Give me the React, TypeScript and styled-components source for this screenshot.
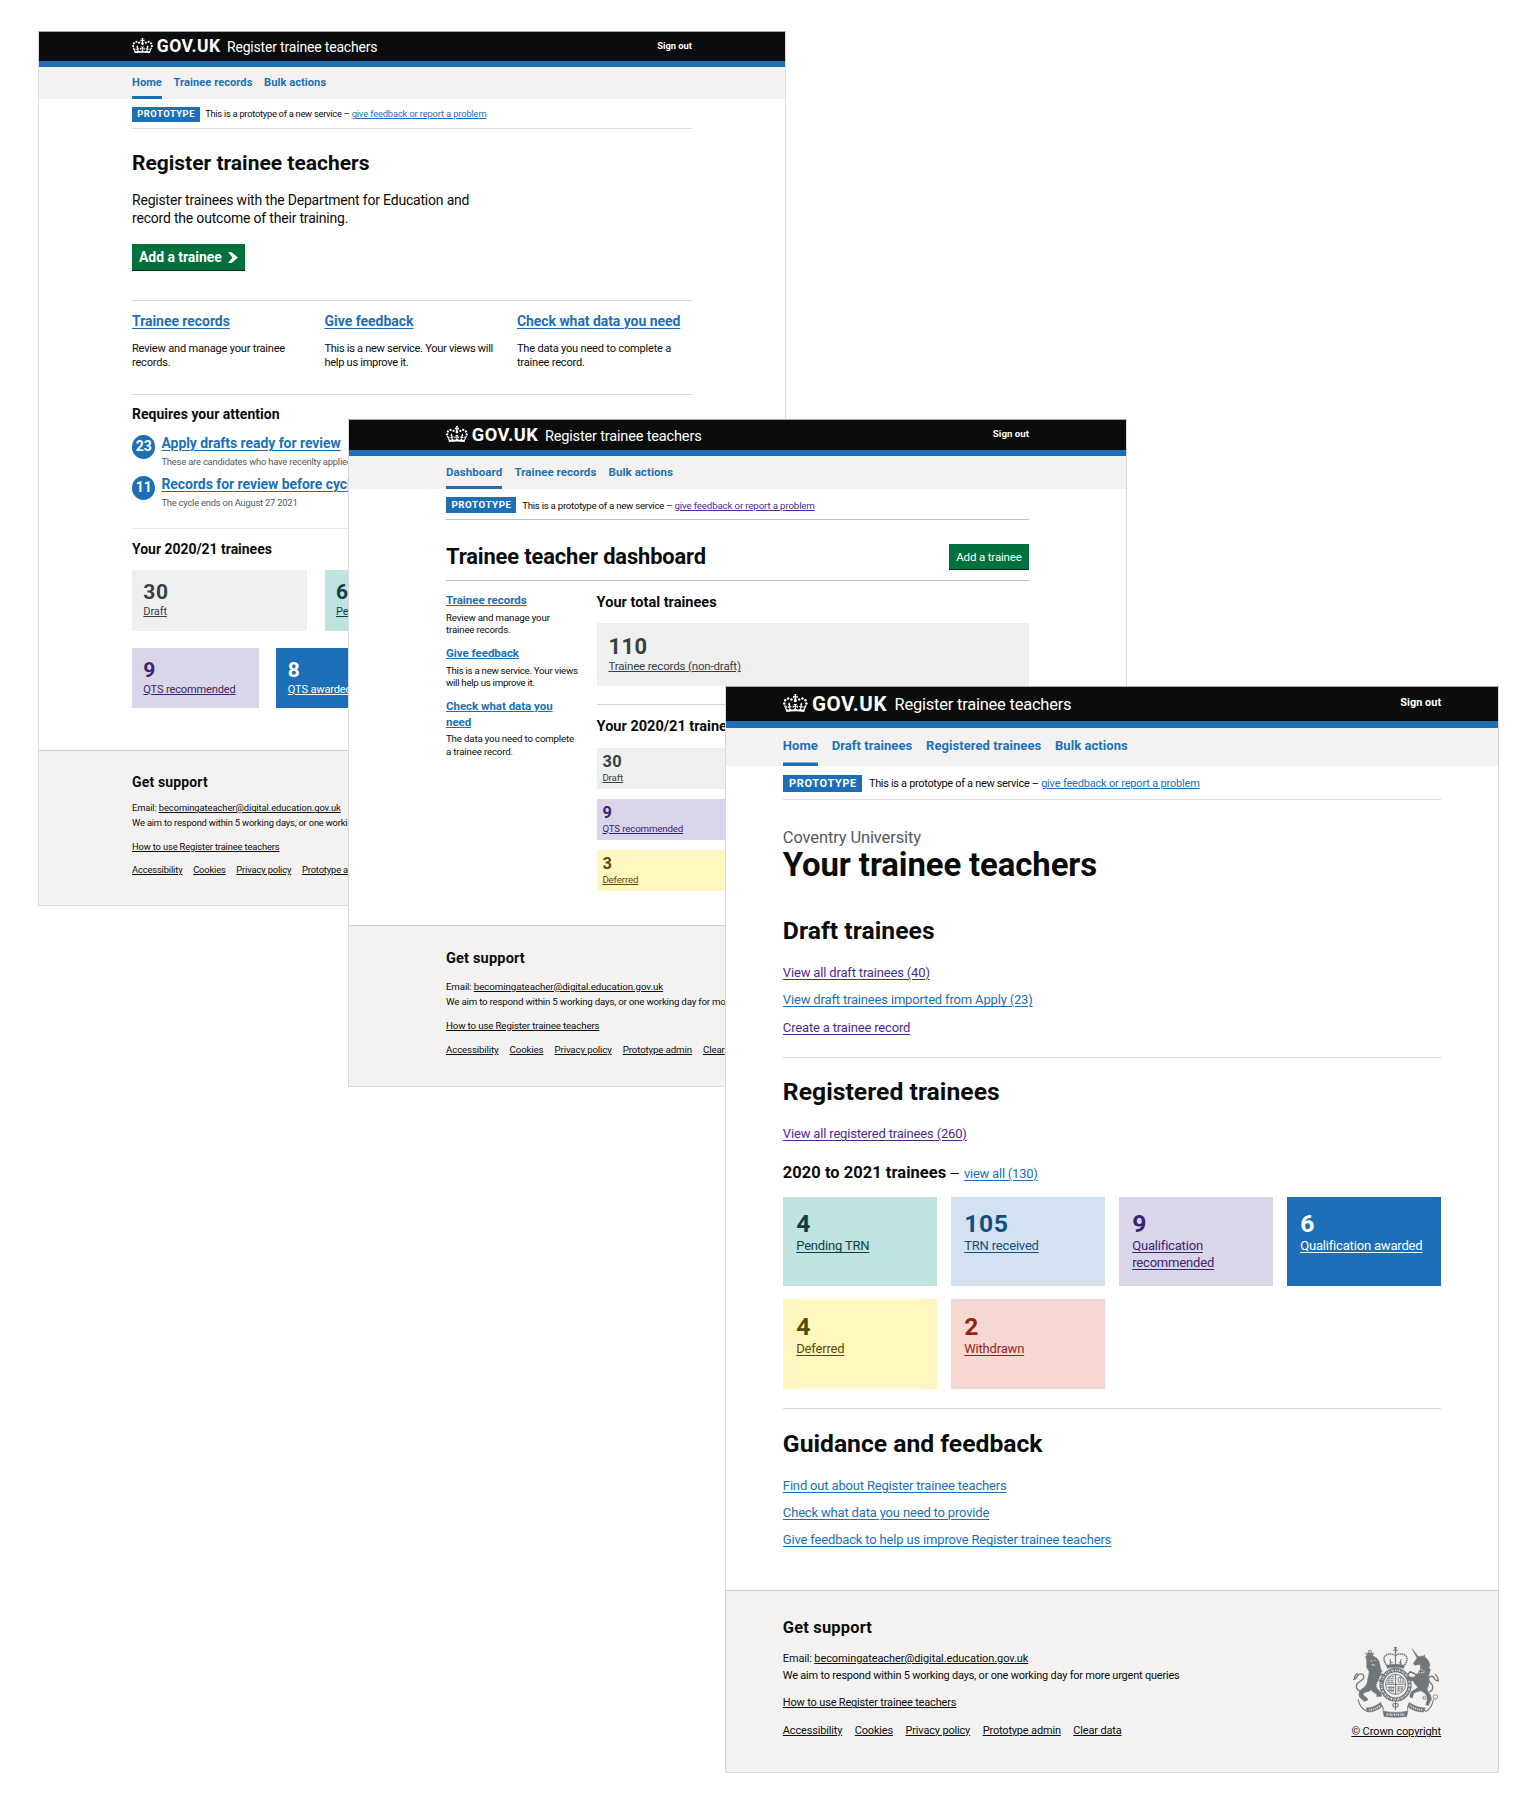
import React from 'react';
import styled, { createGlobalStyle, css } from 'styled-components';

const GlobalStyle = createGlobalStyle`
  *, *::before, *::after { box-sizing: border-box; }
  body { margin: 0; background: #fff; }
`;

/* Every page is laid out on a 960-unit grid; --s is the size of one unit. */
const u = (n: number) => `calc(var(--s) * ${n})`;

const colour = {
  ink: '#0b0c0c',
  blue: '#1d70b8',
  visited: '#4c2c92',
  secondary: '#505a5f',
  pale: '#f3f2f1',
  rule: '#d4d6d8',
  green: '#00703c',
};

type Tone = 'grey' | 'turquoise' | 'sky' | 'purple' | 'blue' | 'yellow' | 'red';

const tones: Record<Tone, { bg: string; fg: string }> = {
  grey: { bg: '#eeefef', fg: '#383f43' },
  turquoise: { bg: '#bfe3e0', fg: '#10403c' },
  sky: { bg: '#d2e2f1', fg: '#144e81' },
  purple: { bg: '#dbd5e9', fg: '#3d2375' },
  blue: { bg: '#1d70b8', fg: '#ffffff' },
  yellow: { bg: '#fff7bf', fg: '#594d00' },
  red: { bg: '#f6d7d2', fg: '#942514' },
};

/* ---------- canvas and windows ---------- */

const Canvas = styled.main`
  position: relative;
  width: 1536px;
  height: 1810px;
  overflow: hidden;
  background: #fff;
  font-family: Roboto, 'Liberation Sans', sans-serif;
  color: ${colour.ink};
`;

const Window = styled.section<{ $x: number; $y: number; $w: number; $h: number; $s: number }>`
  --s: ${(p) => p.$s}px;
  position: absolute;
  left: ${(p) => p.$x}px;
  top: ${(p) => p.$y}px;
  width: ${(p) => p.$w}px;
  height: ${(p) => p.$h}px;
  display: flex;
  flex-direction: column;
  overflow: hidden;
  background: #fff;
  border: 1px solid #dcdada;
  border-top-color: #a9a9a9;
`;

const Container = styled.div`
  width: ${u(960)};
  margin: 0 auto;
`;

/* ---------- text ---------- */

interface TextProps {
  $size: number;
  $lh: number;
  $mt?: number;
  $bold?: boolean;
  $ls?: number;
  $color?: string;
}

const Text = styled.p<TextProps>`
  margin: ${(p) => u(p.$mt ?? 0)} 0 0;
  font-size: ${(p) => u(p.$size)};
  line-height: ${(p) => u(p.$lh)};
  font-weight: ${(p) => (p.$bold ? 700 : 400)};
  letter-spacing: ${(p) => p.$ls ?? (p.$bold ? 0 : -0.0145)}em;
  color: ${(p) => p.$color ?? 'inherit'};
  white-space: nowrap;
`;

const Link = styled.a<{ $color?: string; $ls?: number }>`
  color: ${(p) => p.$color ?? colour.blue};
  text-decoration: underline;
  text-decoration-thickness: 1px;
  text-underline-offset: 0.12em;
  cursor: pointer;
  ${(p) => p.$ls !== undefined && css`letter-spacing: ${p.$ls}em;`}
`;

const Rule = styled.hr<{ $mt: number; $color?: string }>`
  flex: none;
  height: 1px;
  margin: ${(p) => u(p.$mt)} 0 0;
  border: 0;
  background: ${(p) => p.$color ?? colour.rule};
`;

/* ---------- header ---------- */

const HeaderBar = styled.header`
  flex: none;
  padding-bottom: ${u(10)};
  background: ${colour.blue};
  color: #fff;
`;

const HeaderTop = styled.div`
  background: ${colour.ink};
`;

const HeaderInner = styled(Container)`
  display: flex;
  align-items: center;
  height: ${u(50)};
`;

const CrownIcon = styled.svg`
  flex: none;
  width: ${u(36)};
  height: ${u(26.5)};
  margin-bottom: ${u(3)};
`;

const Wordmark = styled.span`
  margin-left: ${u(6.5)};
  font-size: ${u(30)};
  line-height: ${u(50)};
  font-weight: 700;
  letter-spacing: 0.026em;
`;

const ServiceName = styled.span`
  margin: ${u(2)} auto 0 ${u(11)};
  font-size: ${u(24)};
  line-height: ${u(50)};
  letter-spacing: -0.0125em;
`;

const SignOut = styled.a`
  padding-bottom: ${u(4)};
  font-size: ${u(16)};
  font-weight: 700;
`;

const NavBar = styled.nav`
  flex: none;
  background: ${colour.pale};
`;

const NavInner = styled(Container)`
  display: flex;
  gap: ${u(20)};
`;

const NavItem = styled.a<{ $active?: boolean; $h: number }>`
  height: ${(p) => u(p.$h)};
  padding-top: ${u(3)};
  box-shadow: ${(p) => (p.$active ? css`inset 0 ${u(-5)} ${colour.blue}` : 'none')};
  font-size: ${u(19)};
  line-height: ${u(47)};
  font-weight: 700;
  letter-spacing: 0.005em;
  color: ${colour.blue};
  white-space: nowrap;
`;

const Banner = styled.div<{ $line: string; $h: number }>`
  display: flex;
  align-items: center;
  height: ${(p) => u(p.$h)};
  padding-top: ${u(3)};
  border-bottom: 1px solid ${(p) => p.$line};
`;

const Tag = styled.strong`
  margin-right: ${u(9.5)};
  padding: 0 ${u(8)} 0 ${u(9)};
  background: ${colour.blue};
  color: #fff;
  font-size: ${u(16)};
  line-height: ${u(25.5)};
  letter-spacing: 0.059em;
`;

const CROWN =
  'M25 30.2c3.5 1.5 7.7-.2 9.1-3.7 1.5-3.6-.2-7.8-3.9-9.2-3.6-1.4-7.6.3-9.1 3.9-1.4 3.5.3 7.5 3.9 9zM9 39.5c3.6 1.5 7.8-.2 9.2-3.7 1.5-3.6-.2-7.8-3.9-9.1-3.6-1.5-7.6.2-9.1 3.8-1.4 3.5.3 7.5 3.8 9zM4.4 57.2c3.5 1.5 7.7-.2 9.1-3.8 1.5-3.6-.2-7.7-3.9-9.1-3.5-1.5-7.6.3-9.1 3.8-1.4 3.5.3 7.6 3.9 9.1zm38.3-21.4c3.5 1.5 7.7-.2 9.1-3.8 1.5-3.6-.2-7.7-3.9-9.1-3.6-1.5-7.6.3-9.1 3.8-1.3 3.6.4 7.7 3.9 9.1zm64.4-5.6c-3.6 1.5-7.8-.2-9.1-3.7-1.5-3.6.2-7.8 3.8-9.2 3.6-1.4 7.7.3 9.2 3.9 1.3 3.5-.4 7.5-3.9 9zm15.9 9.3c-3.6 1.5-7.7-.2-9.1-3.7-1.5-3.6.2-7.8 3.7-9.1 3.6-1.5 7.7.2 9.2 3.8 1.5 3.5-.3 7.5-3.8 9zm4.7 17.7c-3.6 1.5-7.8-.2-9.2-3.8-1.5-3.6.2-7.7 3.9-9.1 3.6-1.5 7.7.3 9.2 3.8 1.3 3.5-.4 7.6-3.9 9.1zM89.3 35.8c-3.6 1.5-7.8-.2-9.2-3.8-1.4-3.6.2-7.7 3.9-9.1 3.6-1.5 7.7.3 9.2 3.8 1.4 3.6-.3 7.7-3.9 9.1zM69.7 17.7l8.9 4.7V9.3l-8.9 2.8c-.2-.3-.5-.6-.9-.9L72.4 0H59.6l3.5 11.2c-.3.3-.6.5-.9.9l-8.8-2.8v13.1l8.8-4.7c.3.3.6.7.9.9l-5 15.4v.1c-.2.8-.4 1.6-.4 2.4 0 4.1 3.1 7.5 7 8.1h.2c.3 0 .7.1 1 .1.4 0 .7 0 1-.1h.2c4-.6 7.1-4.1 7.1-8.1 0-.8-.1-1.7-.4-2.4V34l-5.1-15.4c.4-.2.7-.6 1-.9zM66 92.8c16.9 0 32.8 1.1 47.1 3.2 4-16.9 8.9-26.7 14-33.5l-9.6-3.4c1 4.9 1.1 7.2 0 10.2-1.5-1.4-3-4.3-4.2-8.7L108.6 76c2.8-2 5-3.2 7.5-3.3-4.4 9.4-10 11.9-13.6 11.2-4.3-.8-6.3-4.6-5.6-7.9 1-4.7 5.7-5.9 8-.5 4.3-8.7-3-11.4-7.6-8.8 7.1-7.2 7.9-13.5 2.1-21.1-8 6.1-8.1 12.3-4.5 20.8-4.7-5.4-12.1-2.5-9.5 6.2 3.4-5.2 7.9-2 7.2 3.1-.6 4.3-6.4 7.8-13.5 7.2-10.3-.9-10.9-8-11.2-13.8 2.5-.5 7.1 1.8 11 7.3L80.2 60c-4.1 4.4-8 5.3-12.3 5.4 1.4-4.4 8-11.6 8-11.6H55.5s6.4 7.2 7.9 11.6c-4.2-.1-8-1-12.3-5.4l1.4 16.4c3.9-5.5 8.5-7.7 10.9-7.3-.3 5.8-.9 12.8-11.1 13.8-7.2.6-12.9-2.9-13.5-7.2-.7-5 3.8-8.3 7.1-3.1 2.7-8.7-4.6-11.6-9.4-6.2 3.7-8.5 3.6-14.7-4.6-20.8-5.8 7.6-5 13.9 2.2 21.1-4.7-2.6-11.9.1-7.7 8.8 2.3-5.5 7.1-4.2 8.1.5.7 3.3-1.3 7.1-5.7 7.9-3.5.7-9-1.8-13.5-11.2 2.5.1 4.7 1.3 7.5 3.3l-4.7-15.4c-1.2 4.4-2.7 7.2-4.3 8.7-1.1-3-.9-5.3 0-10.2l-9.5 3.4c5 6.9 9.9 16.7 14 33.5 14.8-2.1 30.8-3.2 47.7-3.2z';

interface PageTopProps {
  nav: string[];
  navHeight?: number;
  bannerHeight: number;
  linkColor?: string;
  line?: string;
}

const PageTop = ({
  nav,
  navHeight = 55,
  bannerHeight,
  linkColor = colour.blue,
  line = '#dcdddf',
}: PageTopProps) => (
  <>
    <HeaderBar>
      <HeaderTop>
        <HeaderInner>
          <CrownIcon viewBox="0 0 132 97" aria-hidden="true">
            <path fill="#fff" fillRule="evenodd" d={CROWN} />
          </CrownIcon>
          <Wordmark>GOV.UK</Wordmark>
          <ServiceName>Register trainee teachers</ServiceName>
          <SignOut>Sign out</SignOut>
        </HeaderInner>
      </HeaderTop>
    </HeaderBar>
    <NavBar>
      <NavInner>
        {nav.map((item, i) => (
          <NavItem key={item} $active={i === 0} $h={navHeight}>
            {item}
          </NavItem>
        ))}
      </NavInner>
    </NavBar>
    <Container>
      <Banner $line={line} $h={bannerHeight}>
        <Tag>PROTOTYPE</Tag>
        <Text as="span" $size={16} $lh={25} $ls={-0.0285}>
          This is a prototype of a new service –{' '}
          <Link $color={linkColor} $ls={-0.0153}>
            give feedback or report a problem
          </Link>
        </Text>
      </Banner>
    </Container>
  </>
);

/* ---------- tiles and buttons ---------- */

const TileGrid = styled.div<{ $cols: number; $gap: number; $mt: number }>`
  display: grid;
  grid-template-columns: repeat(${(p) => p.$cols}, 1fr);
  gap: ${(p) => u(p.$gap)};
  margin-top: ${(p) => u(p.$mt)};
`;

const TileBox = styled.div<{ $tone: Tone; $h: number; $small?: boolean }>`
  height: ${(p) => u(p.$h)};
  padding: ${(p) => (p.$small ? `${u(9)} ${u(9.5)}` : `${u(19.5)} ${u(19.5)}`)} 0;
  background: ${(p) => tones[p.$tone].bg};
  color: ${(p) => tones[p.$tone].fg};
`;

interface TileProps {
  tone: Tone;
  count: number;
  label: React.ReactNode;
  h?: number;
  small?: boolean;
}

const Tile = ({ tone, count, label, h = 104, small }: TileProps) => (
  <TileBox $tone={tone} $h={h} $small={small}>
    <Text $size={small ? 27 : 36} $lh={small ? 30 : 40} $bold $ls={0.025}>
      {count}
    </Text>
    <Text $size={small ? 16 : 19} $lh={small ? 19 : 25}>
      <Link $color="inherit">{label}</Link>
    </Text>
  </TileBox>
);

const Button = styled.button<{ $bold?: boolean }>`
  display: inline-flex;
  align-items: center;
  height: ${(p) => u(p.$bold ? 46 : 41.5)};
  margin: 0;
  padding: 0 ${u(12)};
  border: 0;
  border-bottom: 1px solid #002d18;
  background: ${colour.green};
  color: #fff;
  font-family: inherit;
  font-size: ${(p) => u(p.$bold ? 24 : 19)};
  font-weight: ${(p) => (p.$bold ? 700 : 400)};
  letter-spacing: ${(p) => (p.$bold ? -0.003 : -0.014)}em;
  white-space: nowrap;
`;

const StartArrow = styled.svg`
  width: ${u(17)};
  height: ${u(19)};
  margin-left: ${u(11)};
`;

/* ---------- footer ---------- */

const FooterBar = styled.footer<{ $mt: number }>`
  flex: 1;
  margin-top: ${(p) => u(p.$mt)};
  background: ${colour.pale};
  border-top: 1px solid #cdcfd1;
`;

const FooterInner = styled(Container)<{ $pt: number }>`
  display: flex;
  justify-content: space-between;
  padding-top: ${(p) => u(p.$pt)};
`;

const FooterLinks = styled.div`
  display: flex;
  gap: ${u(18.3)};
  margin-top: ${u(20)};
`;

const Crest = styled.div`
  display: flex;
  flex-direction: column;
  align-items: flex-end;
  padding-top: ${u(43)};
`;

const CrestArt = styled.svg`
  width: ${u(126)};
  height: ${u(103)};
  margin-right: ${u(2.5)};
`;

interface FooterProps {
  mt: number;
  pt: number;
  response: string;
  responseSpacing?: number;
  links: string[];
  crest?: boolean;
}

const Footer = ({ mt, pt, response, responseSpacing = -0.0185, links, crest }: FooterProps) => (
  <FooterBar $mt={mt}>
    <FooterInner $pt={pt}>
      <div>
        <Text as="h2" $size={24} $lh={30} $bold $ls={0.011}>
          Get support
        </Text>
        <Text $size={16} $lh={25} $mt={56.5 - pt}>
          Email:{' '}
          <Link $color={colour.ink} $ls={-0.0057}>
            becomingateacher@digital.education.gov.uk
          </Link>
          <br />
          <Text as="span" $size={16} $lh={25} $ls={responseSpacing}>
            {response}
          </Text>
        </Text>
        <Text $size={16} $lh={20} $mt={17.7}>
          <Link $color={colour.ink}>How to use Register trainee teachers</Link>
        </Text>
        <FooterLinks>
          {links.map((l) => (
            <Text as="span" key={l} $size={16} $lh={20}>
              <Link $color={colour.ink}>{l}</Link>
            </Text>
          ))}
        </FooterLinks>
      </div>
      {crest && (
        <Crest>
          <RoyalArms />
          <Text $size={16} $lh={20} $mt={10.5} $ls={-0.006}>
            <Link $color={colour.ink}>© Crown copyright</Link>
          </Text>
        </Crest>
      )}
    </FooterInner>
  </FooterBar>
);

const RoyalArms = () => (
  <CrestArt viewBox="0 0 86 70" fill="none" stroke="#6f777b" aria-hidden="true">
    {/* crown */}
    <g strokeWidth="1.1">
      <path d="M42.3 0v7M40.2 3h4.2M40.9.6h2.8" strokeWidth="1.4" />
      <path
        d="M34.5 19c-4-4-5-9-1.5-11.2 3.5-1.800 7.500-1 9.300.7 1.800-1.700 5.800-2.500 9.300-.7C55.100 10 54.100 15 50.100 19"
        strokeWidth="1.5"
        strokeDasharray="1.6 .5"
      />
      <path d="M42.3 8v10M37 12c1 3 .5 4-.5 6M47.6 12c-1 3-.5 4 .5 6M36.5 15.500h3M45.500 15.500h3" />
      <path d="M33.5 18.2q8.800-2.400 17.600 0l-.6 2.900q-8.200-2-16.400 0z" fill="#6f777b" strokeWidth=".6" />
    </g>
    {/* garter and shield */}
    <ellipse cx="42.4" cy="37.5" rx="14" ry="14.6" strokeWidth="4.200" />
    <ellipse cx="42.4" cy="37.5" rx="14" ry="14.6" stroke="#f3f2f1" strokeWidth="2" strokeDasharray="1 .9 .5 1.300" />
    <circle cx="42.4" cy="37" r="10" strokeWidth=".9" />
    <path d="M42.4 27v20M32.400 37h20" strokeWidth="1" />
    <path
      d="M34.5 31.500h6.500M34 33.500h7M35.500 29.500h5.500M34.500 35.300h6.500M44 39.500h7M44 41.500h6.500M44 43.500h5"
      strokeWidth="1.1"
      strokeDasharray="2.6 .6"
    />
    <path d="M45 34.500v-4l2.500-1 2.500 2.500v3zM47.500 30v4M36 39v5M38 39v6M40 39v6M34.300 40h7M35.500 43h5.500" strokeWidth=".9" />
    {/* lion */}
    <g fill="#6f777b" strokeWidth=".5">
      <path d="M12.500 5.500l1.400 3h5.600l1.300-3-2 1.200-.6-2.200-1.500 1.500-1.500-1.500-.7 2.200z" />
      <path d="M15 3.600h3.500" strokeWidth="1" />
      <path d="M12.500 9.500c3-1.500 6-1.500 9 0 3 1.500 4.500 4 5 7 .8 3 .5 5 2.500 7.500-1.500.8-1.500 3-2.300 5-1 3.500-2.700 5-3.500 8-.6 3 .8 4.500 3 6.500 1.300 1.500 2.300 3 2.300 5.500h-5l.5-2c-2-.6-4.500-2.500-6-4.500-1.500 1.500-3.500 2-5.500 2.500-2.500.7-3 2-1.500 3.500 1.200 1.300 3.500 1.700 3.800 4l-3.300 1.500c-2-1.500-5-3-5.500-6-.4-4 2-6 4.500-7.500 2.500-1.800 3.500-4 4-7.500.4-3 1.500-6 1.500-9-.8-1.700-2.500-3-2.500-5 .2-3.500.6-6.500-1-9.500z" />
      <path d="M26 27l4 .5M25.500 33l4.500 1" strokeWidth="2" />
    </g>
    <path d="M17.500 13.300l1.800 1M21 13.500l1.400-.6M18.500 17.500l3.500.5" stroke="#f3f2f1" strokeWidth=".8" />
    <path d="M8.500 44.500C3 43 2 38 5 35.500c3-2.500 6-3 5.800-6-.3-3-3.800-4-5.800-1.500-1.400 1.700-1.500 3.500-4 4 .6-2.600 1.200-5 3.800-6" strokeWidth="1.300" />
    {/* unicorn */}
    <g fill="#6f777b" strokeWidth=".5">
      <path d="M58.800 1.500l6.800 8.500-1.700 1z" />
      <path d="M64 10.500c2-1.500 4-1.700 5.500-1.300l1.500-1.700.6 2.500c3 1.700 4.500 5 5 8.500l-1 2 1.500 2c-.5 2.500-1.800 4.500-2 7-.2 3.500 1.500 6-.4 9.500-.8 1.700-1 3-.3 4.500 1 2 3 3.500 3.200 6.500.2 3-1.500 5.500-2.500 8l-2.500-.5c.8-3 2-6.500.7-9-1.200-2.500-3.500-4-6.300-5-3 1.500-5 1-6.500 2.700-.8 1.200-.8 3-1.500 4.500l-2.500-1c.3-3.500 1.300-6 4-7 1.500-.6 3-1.300 4-3-2.600-2-3.500-4-4.500-6l-6-1.500.3-2.500 6.700.3c1.300-2.800 4-4 5.500-7 .8-2 1-4 .2-6l-5.200 1-1.500-1.700z" />
      <path d="M57 24.500l8 3.500M55 27l2.500-3" strokeWidth="1.700" />
    </g>
    <path d="M60.500 23.500l5.500-2 5.500 2.500M62 26l10-1" stroke="#f3f2f1" strokeWidth=".8" strokeDasharray="1.2 .7" />
    <path d="M76 44.500c4.500-1.500 4-6.500 1.500-8.500-2.500-2-3-5-1-6.500 2.500-1.700 4.500.5 4.500 2 1 2 2.500 1.500 4 2-.5-3-.7-5-3.500-6.500" strokeWidth="1.300" />
    <g strokeWidth=".8">
      <circle cx="71" cy="50.5" r="1.5" />
      <circle cx="76" cy="51.5" r="2" />
      <circle cx="82" cy="49.5" r="2.2" />
    </g>
    {/* motto ribbons */}
    <path d="M5 52c1.500 7 5 10.500 9.500 12l3-2.500c4 0 7-1.500 10-4.500" strokeWidth="1" />
    <path d="M13 60.500c5 0 9.500-1.500 14.500-5.500l1.500 4c-4.500 4-9.500 5.500-14.500 5.500z" fill="#6f777b" strokeWidth=".6" />
    <path d="M16 62.500c4-.3 7.500-1.500 11.500-4.500" stroke="#f3f2f1" strokeWidth="1.500" strokeDasharray="1.200 .9" />
    <path d="M80 52c-1 7-4 10-7.500 12l-3-2.500c-5 0-9-2-12-4.500" strokeWidth="1" />
    <path d="M72 60.500c-5 0-11-1.500-16-5.500l-1.500 4c4.500 4 10.500 5.500 15.500 5.500z" fill="#6f777b" strokeWidth=".6" />
    <path d="M69 62.500c-4-.3-8.500-1.500-12.500-4.500" stroke="#f3f2f1" strokeWidth="1.500" strokeDasharray="1.200 .9" />
    <path d="M29 58c1 1.500 1.500 3 1 5M55.500 58c-1.500 1.500-1.500 3-1 5" strokeWidth="1" />
    <path d="M30 63.500q12.500 3 24.500 0l-1 5.500q-11.200 1.600-22.500 0z" fill="#6f777b" strokeWidth=".6" />
    <path d="M33.500 66.800q9 1.200 18 0" stroke="#f3f2f1" strokeWidth="2" strokeDasharray="1.300 .9 .6 .9" />
    <path d="M42.300 53.500v9M39.500 57.500c0-2 2.800-2 2.800 0 0-2 2.800-2 2.800 0s-2.800 2.500-2.800 2.500-2.800-.5-2.800-2.500z" strokeWidth="1" />
  </CrestArt>
);

/* ---------- first page ---------- */

const Columns = styled.div`
  display: grid;
  grid-template-columns: ${u(300)} ${u(300)} 1fr;
  gap: ${u(30)};
  margin-top: ${u(20)};
`;

const Alert = styled.div<{ $mt: number }>`
  display: flex;
  gap: ${u(10.5)};
  margin-top: ${(p) => u(p.$mt)};
`;

const Badge = styled.span`
  flex: none;
  width: ${u(40)};
  height: ${u(41)};
  border-radius: 50%;
  background: ${colour.blue};
  color: #fff;
  font-size: ${u(24)};
  line-height: ${u(41)};
  font-weight: 700;
  text-align: center;
`;

const HomePage = () => (
  <Window $x={38} $y={31} $w={748} $h={875} $s={0.58333}>
    <PageTop nav={['Home', 'Trainee records', 'Bulk actions']} bannerHeight={51.5} />
    <Container>
      <Text as="h1" $size={36} $lh={40} $mt={39.5} $bold>
        Register trainee teachers
      </Text>
      <Text $size={24} $lh={30} $mt={29} $ls={-0.0135}>
        Register trainees with the Department for Education and
        <br />
        record the outcome of their training.
      </Text>
      <Text as="div" $size={24} $lh={46} $mt={29}>
        <Button $bold>
          Add a trainee
          <StartArrow viewBox="0 0 17.5 19" aria-hidden="true">
            <path fill="#fff" d="M0 0h6.500l11 9.500-11 9.500H0l8-9.500z" />
          </StartArrow>
        </Button>
      </Text>
      <Rule $mt={50} />
      <Columns>
        <div>
          <Text as="h2" $size={24} $lh={30} $bold $ls={-0.003}>
            <Link>Trainee records</Link>
          </Text>
          <Text $size={19} $lh={25} $mt={19.4} $ls={-0.019}>
            Review and manage your trainee
            <br />
            records.
          </Text>
        </div>
        <div>
          <Text as="h2" $size={24} $lh={30} $bold $ls={-0.001}>
            <Link>Give feedback</Link>
          </Text>
          <Text $size={19} $lh={25} $mt={19.4} $ls={-0.0275}>
            This is a new service. Your views will
            <br />
            help us improve it.
          </Text>
        </div>
        <div>
          <Text as="h2" $size={24} $lh={30} $bold $ls={-0.0037}>
            <Link>Check what data you need</Link>
          </Text>
          <Text $size={19} $lh={25} $mt={19.4} $ls={-0.019}>
            The data you need to complete a
            <br />
            trainee record.
          </Text>
        </div>
      </Columns>
      <Rule $mt={40} />
      <Text as="h2" $size={24} $lh={30} $mt={18.5} $bold $ls={0.002}>
        Requires your attention
      </Text>
      <Alert $mt={20}>
        <Badge>23</Badge>
        <div>
          <Text $size={24} $lh={30} $bold $ls={-0.0036}>
            <Link>Apply drafts ready for review</Link>
          </Text>
          <Text $size={16} $lh={20} $mt={5.6} $ls={-0.018} $color={colour.secondary}>
            These are candidates who have recenlty applied
          </Text>
        </div>
      </Alert>
      <Alert $mt={14.5}>
        <Badge>11</Badge>
        <div>
          <Text $size={24} $lh={30} $bold $ls={-0.0036}>
            <Link>Records for review before cycle</Link>
          </Text>
          <Text $size={16} $lh={20} $mt={5.6} $ls={-0.0214} $color={colour.secondary}>
            The cycle ends on August 27 2021
          </Text>
        </div>
      </Alert>
      <Rule $mt={33.6} $color="#e9eaeb" />
      <Text as="h2" $size={24} $lh={30} $mt={19.7} $bold $ls={-0.0015}>
        Your 2020/21 trainees
      </Text>
      <TileGrid $cols={3} $gap={30.5} $mt={20.3}>
        <Tile tone="grey" count={30} label="Draft" />
        <Tile tone="turquoise" count={6} label="Pending" />
      </TileGrid>
      <TileGrid $cols={4} $gap={30.5} $mt={29.5}>
        <Tile tone="purple" count={9} label="QTS recommended" />
        <Tile tone="blue" count={8} label="QTS awarded" />
      </TileGrid>
    </Container>
    <Footer
      mt={71}
      pt={39}
      response="We aim to respond within 5 working days, or one working"
      links={['Accessibility', 'Cookies', 'Privacy policy', 'Prototype admin']}
    />
  </Window>
);

/* ---------- second page ---------- */

const TitleRow = styled.div`
  display: flex;
  justify-content: space-between;
  align-items: flex-start;
  height: ${u(41.5)};
  margin-top: ${u(40)};
`;

const Split = styled.div`
  display: grid;
  grid-template-columns: ${u(218)} ${u(712)};
  gap: ${u(30)};
`;

const SideItem = styled.div<{ $mt: number }>`
  margin-top: ${(p) => u(p.$mt)};
`;

const TileStack = styled.div`
  display: grid;
  gap: ${u(16)};
`;

const DashboardPage = () => (
  <Window $x={348} $y={419} $w={779} $h={668} $s={0.6073}>
    <PageTop
      nav={['Dashboard', 'Trainee records', 'Bulk actions']}
      navHeight={54}
      bannerHeight={51}
      linkColor={colour.visited}
      line="#bfc1c3"
    />
    <Container>
      <TitleRow>
        <Text as="h1" $size={36} $lh={41.5} $bold $ls={-0.0054}>
          Trainee teacher dashboard
        </Text>
        <Button>Add a trainee</Button>
      </TitleRow>
      <Rule $mt={16.5} $color="#bfc1c3" />
      <Split>
        <aside>
          <SideItem $mt={20.5}>
            <Text as="h2" $size={19} $lh={26} $bold $ls={-0.003}>
              <Link>Trainee records</Link>
            </Text>
            <Text $size={16} $lh={20} $mt={5.5} $ls={-0.018}>
              Review and manage your
              <br />
              trainee records.
            </Text>
          </SideItem>
          <SideItem $mt={15.8}>
            <Text as="h2" $size={19} $lh={26} $bold $ls={-0.003}>
              <Link>Give feedback</Link>
            </Text>
            <Text $size={16} $lh={20} $mt={5.5} $ls={-0.029}>
              This is a new service. Your views
              <br />
              will help us improve it.
            </Text>
          </SideItem>
          <SideItem $mt={15.8}>
            <Text as="h2" $size={19} $lh={26} $bold $ls={-0.003}>
              <Link>
                Check what data you
                <br />
                need
              </Link>
            </Text>
            <Text $size={16} $lh={20} $mt={4.5} $ls={-0.018}>
              The data you need to complete
              <br />a trainee record.
            </Text>
          </SideItem>
        </aside>
        <div>
          <Text as="h2" $size={24} $lh={30} $mt={20.5} $bold>
            Your total trainees
          </Text>
          <TileGrid $cols={1} $gap={0} $mt={19.5}>
            <Tile tone="grey" h={103.5} count={110} label="Trainee records (non-draft)" />
          </TileGrid>
          <Rule $mt={30} />
          <Text as="h2" $size={24} $lh={30} $mt={20} $bold $ls={-0.0015}>
            Your 2020/21 trainees
          </Text>
          <TileGrid $cols={2} $gap={16} $mt={20.4}>
            <TileStack>
              <Tile small h={68} tone="grey" count={30} label="Draft" />
              <Tile small h={68} tone="purple" count={9} label="QTS recommended" />
              <Tile small h={68} tone="yellow" count={3} label="Deferred" />
            </TileStack>
          </TileGrid>
        </div>
      </Split>
    </Container>
    <Footer
      mt={56}
      pt={38}
      response="We aim to respond within 5 working days, or one working day for more"
      responseSpacing={-0.021}
      links={['Accessibility', 'Cookies', 'Privacy policy', 'Prototype admin', 'Clear']}
    />
  </Window>
);

/* ---------- third page ---------- */

const LinkList = styled.ul<{ $mt: number }>`
  display: grid;
  gap: ${u(15)};
  margin: ${(p) => u(p.$mt)} 0 0;
  padding: 0;
  list-style: none;
`;

const YearHeading = styled.div`
  display: flex;
  align-items: baseline;
  gap: ${u(5)};
  margin-top: ${u(30.5)};
`;

const Dash = styled.span`
  margin-right: ${u(2)};
`;

interface Item {
  text: string;
  color?: string;
}

const Links = ({ items, mt }: { items: Item[]; mt: number }) => (
  <LinkList $mt={mt}>
    {items.map((i) => (
      <Text as="li" key={i.text} $size={19} $lh={25} $ls={-0.0135}>
        <Link $color={i.color}>{i.text}</Link>
      </Text>
    ))}
  </LinkList>
);

const TraineesPage = () => (
  <Window $x={725} $y={686} $w={774} $h={1087} $s={0.6857}>
    <PageTop
      nav={['Home', 'Draft trainees', 'Registered trainees', 'Bulk actions']}
      bannerHeight={50.5}
    />
    <Container>
      <Text $size={24} $lh={30} $mt={40.5} $ls={-0.0066} $color={colour.secondary}>
        Coventry University
      </Text>
      <Text as="h1" $size={48} $lh={50} $mt={-1} $bold $ls={-0.0034}>
        Your trainee teachers
      </Text>
      <Text as="h2" $size={36} $lh={40} $mt={50.5} $bold $ls={0.002}>
        Draft trainees
      </Text>
      <Links
        mt={28.5}
        items={[
          { text: 'View all draft trainees (40)', color: colour.visited },
          { text: 'View draft trainees imported from Apply (23)' },
          { text: 'Create a trainee record', color: colour.visited },
        ]}
      />
      <Rule $mt={30.3} />
      <Text as="h2" $size={36} $lh={40} $mt={29} $bold $ls={0.0016}>
        Registered trainees
      </Text>
      <Links
        mt={28.8}
        items={[{ text: 'View all registered trainees (260)', color: colour.visited }]}
      />
      <YearHeading>
        <Text as="h3" $size={24} $lh={30} $bold $ls={0.0032}>
          2020 to 2021 trainees
        </Text>
        <Text as="span" $size={19} $lh={30} $ls={-0.0178}>
          <Dash>—</Dash> <Link>view all (130)</Link>
        </Text>
      </YearHeading>
      <TileGrid $cols={4} $gap={20} $mt={17.7}>
        <Tile h={130} tone="turquoise" count={4} label="Pending TRN" />
        <Tile h={130} tone="sky" count={105} label="TRN received" />
        <Tile
          h={130}
          tone="purple"
          count={9}
          label={
            <>
              Qualification
              <br />
              recommended
            </>
          }
        />
        <Tile h={130} tone="blue" count={6} label="Qualification awarded" />
        <Tile h={130} tone="yellow" count={4} label="Deferred" />
        <Tile h={130} tone="red" count={2} label="Withdrawn" />
      </TileGrid>
      <Rule $mt={29} />
      <Text as="h2" $size={36} $lh={40} $mt={29.5} $bold>
        Guidance and feedback
      </Text>
      <Links
        mt={28.6}
        items={[
          { text: 'Find out about Register trainee teachers' },
          { text: 'Check what data you need to provide' },
          { text: 'Give feedback to help us improve Register trainee teachers' },
        ]}
      />
    </Container>
    <Footer
      mt={60}
      pt={39.5}
      crest
      response="We aim to respond within 5 working days, or one working day for more urgent queries"
      links={['Accessibility', 'Cookies', 'Privacy policy', 'Prototype admin', 'Clear data']}
    />
  </Window>
);

export default function App() {
  return (
    <>
      <GlobalStyle />
      <Canvas>
        <HomePage />
        <DashboardPage />
        <TraineesPage />
      </Canvas>
    </>
  );
}
